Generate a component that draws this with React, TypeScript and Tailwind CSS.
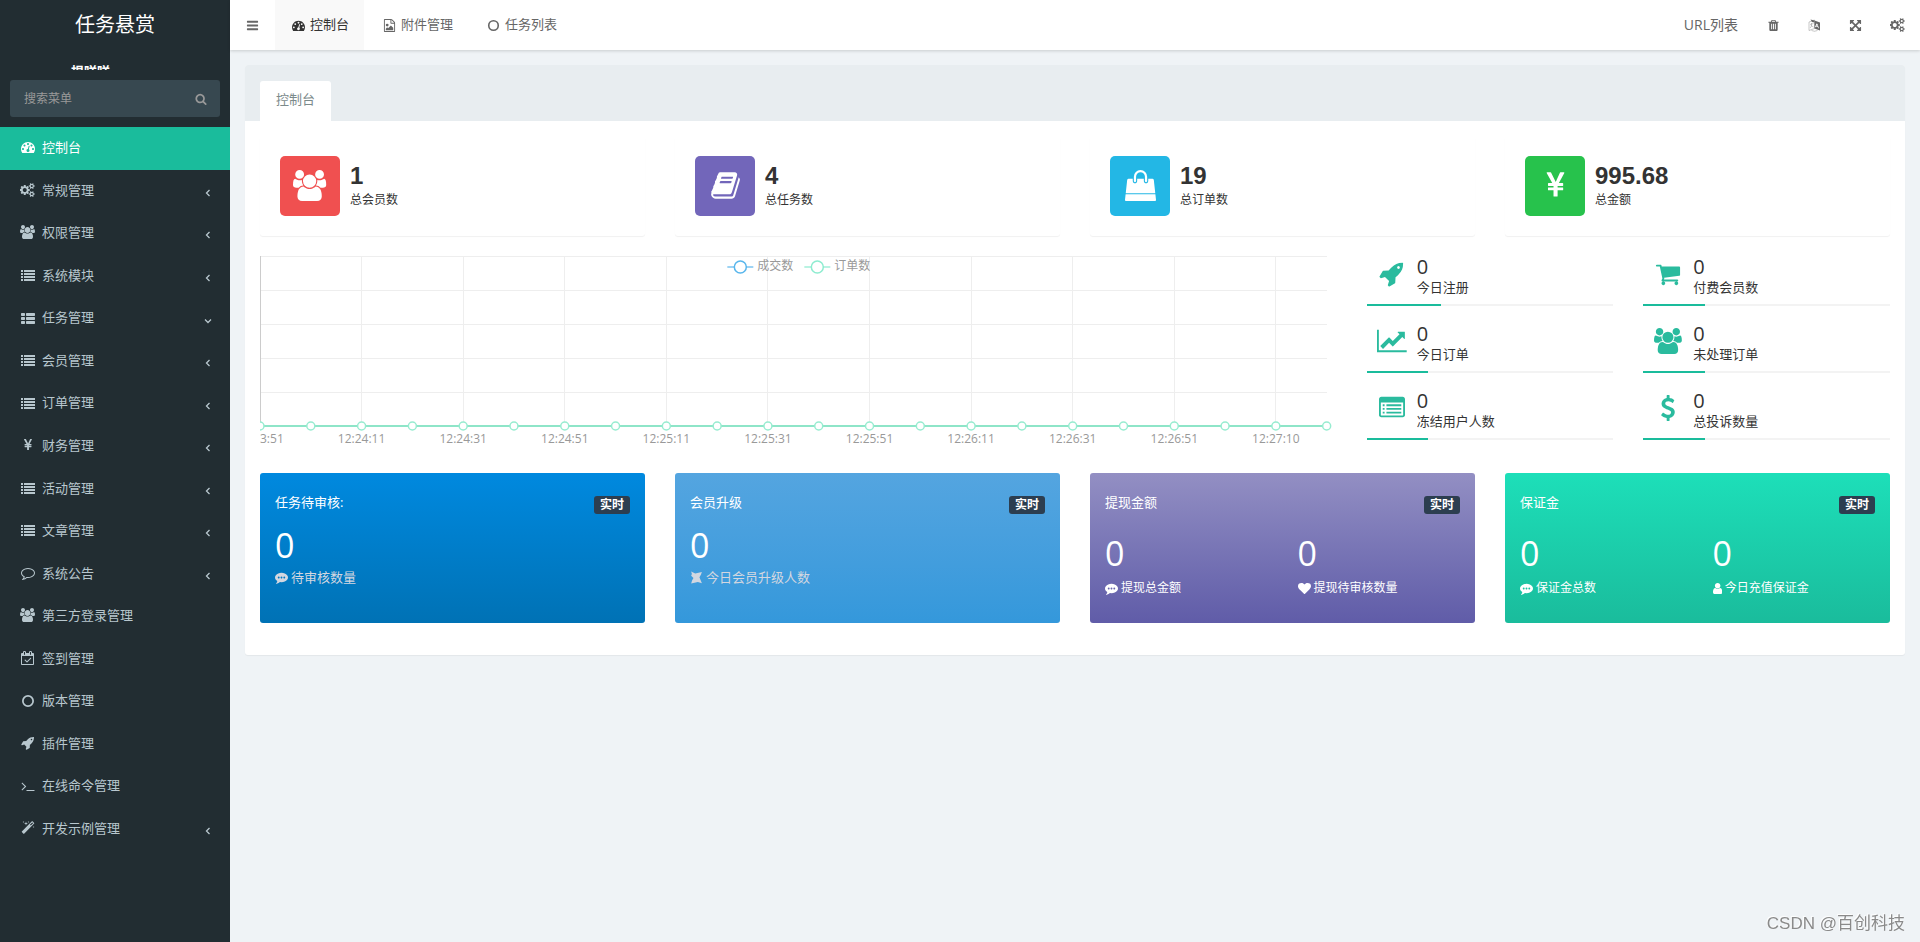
import type { ReactNode } from "react";

const GLYPHS: Record<string, { w?: number; x?: number; d: string }> = {
  bars: {
    d: "M1664 1344v128q0 26-19 45t-45 19h-1408q-26 0-45-19t-19-45v-128q0-26 19-45t45-19h1408q26 0 45 19t19 45zm0-512v128q0 26-19 45t-45 19h-1408q-26 0-45-19t-19-45v-128q0-26 19-45t45-19h1408q26 0 45 19t19 45zm0-512v128q0 26-19 45t-45 19h-1408q-26 0-45-19t-19-45v-128q0-26 19-45t45-19h1408q26 0 45 19t19 45z",
  },
  dashboard: {
    d: "M384 1152q0-53-37.5-90.5t-90.5-37.5-90.5 37.5-37.5 90.5 37.5 90.5 90.5 37.5 90.5-37.5 37.5-90.5zm192-448q0-53-37.5-90.5t-90.5-37.5-90.5 37.5-37.5 90.5 37.5 90.5 90.5 37.5 90.5-37.5 37.5-90.5zm428 481l101-382q6-26-7.5-48.5t-38.5-29.5-48 6.5-30 39.5l-101 382q-60 5-107 43.5t-63 98.5q-20 77 20 146t117 89 146-20 89-117q16-60-6-117t-72-91zm660-33q0-53-37.5-90.5t-90.5-37.5-90.5 37.5-37.5 90.5 37.5 90.5 90.5 37.5 90.5-37.5 37.5-90.5zm-640-640q0-53-37.5-90.5t-90.5-37.5-90.5 37.5-37.5 90.5 37.5 90.5 90.5 37.5 90.5-37.5 37.5-90.5zm448 192q0-53-37.5-90.5t-90.5-37.5-90.5 37.5-37.5 90.5 37.5 90.5 90.5 37.5 90.5-37.5 37.5-90.5zm320 448q0 261-141 483-19 29-54 29h-1402q-35 0-54-29-141-221-141-483 0-182 71-348t191-286 286-191 348-71 348 71 286 191 191 286 71 348z",
  },
  users: {
    w: 1920,
    x: -64,
    d: "M529 896q-162 5-265 128h-134q-82 0-138-40.5t-56-118.5q0-353 124-353 6 0 43.5 21t97.5 42.5 119 21.5q67 0 133-23-5 37-5 66 0 139 81 256zm1071 637q0 120-73 189.5t-194 69.5h-874q-121 0-194-69.5t-73-189.5q0-53 3.5-103.5t14-109 26.5-108.5 43-97.5 62-81 85.5-53.5 111.5-20q10 0 43 21.5t73 48 107 48 135 21.5 135-21.5 107-48 73-48 43-21.5q61 0 111.5 20t85.5 53.5 62 81 43 97.5 26.5 108.5 14 109 3.5 103.5zm-1024-1277q0 106-75 181t-181 75-181-75-75-181 75-181 181-75 181 75 75 181zm704 384q0 159-112.5 271.5t-271.5 112.5-271.5-112.5-112.5-271.5 112.5-271.5 271.5-112.5 271.5 112.5 112.5 271.5zm576 225q0 78-56 118.5t-138 40.5h-134q-103-123-265-128 81-117 81-256 0-29-5-66 66 23 133 23 59 0 119-21.5t97.5-42.5 43.5-21q124 0 124 353zm-128-609q0 106-75 181t-181 75-181-75-75-181 75-181 181-75 181 75 75 181z",
  },
  cogs: {
    w: 1920,
    x: -32,
    d: "M832 896q0-106-75-181t-181-75-181 75-75 181 75 181 181 75 181-75 75-181zm768 512q0-52-38-90t-90-38-90 38-38 90q0 53 37.5 90.5t90.5 37.5 90.5-37.5 37.5-90.5zm0-1024q0-52-38-90t-90-38-90 38-38 90q0 53 37.5 90.5t90.5 37.5 90.5-37.5 37.5-90.5zm-384 421v185q0 10-7 19.5t-16 10.5l-155 24q-11 35-32 76 34 48 90 115 7 11 7 20 0 12-7 19-23 30-82.5 89.5t-78.5 59.5q-11 0-21-7l-115-90q-37 19-77 31-11 108-23 155-7 24-30 24h-186q-11 0-20-7.5t-10-17.5l-23-153q-34-10-75-31l-118 89q-7 7-20 7-11 0-21-8-144-133-144-160 0-9 7-19 10-14 41-53t47-61q-23-44-35-82l-152-24q-10-1-17-9.5t-7-19.5v-185q0-10 7-19.5t16-10.5l155-24q11-35 32-76-34-48-90-115-7-11-7-20 0-12 7-20 22-30 82-89t79-59q11 0 21 7l115 90q34-18 77-32 11-108 23-154 7-24 30-24h186q11 0 20 7.5t10 17.5l23 153q34 10 75 31l118-89q8-7 20-7 11 0 21 8 144 133 144 160 0 8-7 19-12 16-42 54t-45 60q23 48 34 82l152 23q10 2 17 10.5t7 19.5zm640 533v140q0 16-149 31-12 27-30 52 51 113 51 138 0 4-4 7-122 71-124 71-8 0-46-47t-52-68q-20 2-30 2t-30-2q-14 21-52 68t-46 47q-2 0-124-71-4-3-4-7 0-25 51-138-18-25-30-52-149-15-149-31v-140q0-16 149-31 13-29 30-52-51-113-51-138 0-4 4-7 4-2 35-20t59-34 30-16q8 0 46 46.5t52 67.5q20-2 30-2t30 2q51-71 92-112l6-2q4 0 124 70 4 3 4 7 0 25-51 138 17 23 30 52 149 15 149 31zm0-1024v140q0 16-149 31-12 27-30 52 51 113 51 138 0 4-4 7-122 71-124 71-8 0-46-47t-52-68q-20 2-30 2t-30-2q-14 21-52 68t-46 47q-2 0-124-71-4-3-4-7 0-25 51-138-18-25-30-52-149-15-149-31v-140q0-16 149-31 13-29 30-52-51-113-51-138 0-4 4-7 4-2 35-20t59-34 30-16q8 0 46 46.5t52 67.5q20-2 30-2t30 2q51-71 92-112l6-2q4 0 124 70 4 3 4 7 0 25-51 138 17 23 30 52 149 15 149 31z",
  },
  list: {
    d: "M0 256h256v256h-256zM384 256h1408v256h-1408zM0 640h256v256h-256zM384 640h1408v256h-1408zM0 1024h256v256h-256zM384 1024h1408v256h-1408zM0 1408h256v256h-256zM384 1408h1408v256h-1408z",
  },
  thList: {
    d: "M96 256h320q96 0 96 96v192q0 96-96 96h-320q-96 0-96-96v-192q0-96 96-96zM736 256h960q96 0 96 96v192q0 96-96 96h-960q-96 0-96-96v-192q0-96 96-96zM96 768h320q96 0 96 96v192q0 96-96 96h-320q-96 0-96-96v-192q0-96 96-96zM736 768h960q96 0 96 96v192q0 96-96 96h-960q-96 0-96-96v-192q0-96 96-96zM96 1280h320q96 0 96 96v192q0 96-96 96h-320q-96 0-96-96v-192q0-96 96-96zM736 1280h960q96 0 96 96v192q0 96-96 96h-960q-96 0-96-96v-192q0-96 96-96z",
  },
  rocket: {
    d: "M1440 448q0-40-28-68t-68-28-68 28-28 68 28 68 68 28 68-28 28-68zm224-288q0 249-75.5 430.5t-253.5 360.5q-81 80-195 176l-20 379q-2 16-16 26l-384 224q-7 4-16 4-12 0-23-9l-64-64q-13-14-8-32l85-276-281-281-276 85q-3 1-9 1-14 0-23-9l-64-64q-17-19-5-39l224-384q10-14 26-16l379-20q96-114 176-195 188-187 358-258t431-71q14 0 24 9.5t10 22.5z",
  },
  magic: {
    d: "M1254 581l293-293-107-107-293 293zm447-293q0 27-18 45l-1286 1286q-18 18-45 18t-45-18l-198-198q-18-18-18-45t18-45l1286-1286q18-18 45-18t45 18l198 198q18 18 18 45zm-1351-190l98 30-98 30-30 98-30-98-98-30 98-30 30-98zm350 162l196 60-196 60-60 196-60-196-196-60 196-60 60-196zm930 478l98 30-98 30-30 98-30-98-98-30 98-30 30-98zm-640-640l98 30-98 30-30 98-30-98-98-30 98-30 30-98z",
  },
  circle: {
    d: "M896 128a768 768 0 1 0 0 1536a768 768 0 1 0 0-1536zm0 224a544 544 0 1 1 0 1088a544 544 0 1 1 0-1088z",
  },
  terminal: {
    d: "M649 983l-466 466q-10 10-23 10t-23-10l-50-50q-10-10-10-23t10-23l393-393-393-393q-10-10-10-23t10-23l50-50q13-10 23-10t23 10l466 466q10 10 10 23t-10 23zm1079 457v64q0 14-9 23t-23 9h-960q-14 0-23-9t-9-23v-64q0-14 9-23t23-9h960q14 0 23 9t9 23z",
  },
  calendar: {
    d: "M1303 964l-512 512q-10 9-23 9t-23-9l-288-288q-9-10-9-23t9-22l46-46q9-9 22-9t23 9l220 220 444-444q10-9 23-9t22 9l46 46q9 9 9 22t-9 23zm-1175 700h1408v-1024h-1408v1024zm384-1216v-288q0-14-9-23t-23-9h-64q-14 0-23 9t-9 23v288q0 14 9 23t23 9h64q14 0 23-9t9-23zm768 0v-288q0-14-9-23t-23-9h-64q-14 0-23 9t-9 23v288q0 14 9 23t23 9h64q14 0 23-9t9-23zm384-64v1280q0 52-38 90t-90 38h-1408q-52 0-90-38t-38-90v-1280q0-52 38-90t90-38h128v-96q0-66 47-113t113-47h64q66 0 113 47t47 113v96h384v-96q0-66 47-113t113-47h64q66 0 113 47t47 113v96h128q52 0 90 38t38 90z",
  },
  commentO: {
    d: "M896 384q-204 0-381.5 69.5t-282 187.5-104.5 255q0 112 71.5 213.5t201.5 175.5l87 50-27 96q-24 91-70 172 152-63 275-171l43-38 57 6q69 8 130 8 204 0 381.5-69.5t282-187.5 104.5-255-104.5-255-282-187.5-381.5-69.5zm896 512q0 174-120 321.5t-326 233-450 85.5q-70 0-145-8-198 175-460 242-49 14-114 22h-5q-15 0-27-10.5t-16-27.5v-1q-3-4-.5-12t2-10 4.5-9.5l6-9 7-8.5 8-9q7-8 31-34.5t34.5-38 31-39.5 32.5-51 27-59 26-76q-157-89-247.5-220t-90.5-281q0-174 120-321.5t326-233 450-85.5 450 85.5 326 233 120 321.5z",
  },
  commenting: {
    d: "M640 896q0-53-37.5-90.5t-90.5-37.5-90.5 37.5-37.5 90.5 37.5 90.5 90.5 37.5 90.5-37.5 37.5-90.5zm384 0q0-53-37.5-90.5t-90.5-37.5-90.5 37.5-37.5 90.5 37.5 90.5 90.5 37.5 90.5-37.5 37.5-90.5zm384 0q0-53-37.5-90.5t-90.5-37.5-90.5 37.5-37.5 90.5 37.5 90.5 90.5 37.5 90.5-37.5 37.5-90.5zm384 0q0 174-120 321.5t-326 233-450 85.5q-110 0-211-18-173 173-435 229-52 10-86 13-12 1-22-6t-13-18q-4-15 20-37 5-5 23.5-21.5t25.5-23.5 23.5-25.5 24-31.5 20.5-37 20-48 14.5-57.5 12.5-72.5q-146-90-229.5-216.5t-83.5-269.5q0-174 120-321.5t326-233 450-85.5 450 85.5 326 233 120 321.5z",
  },
  user: {
    w: 1280,
    x: 256,
    d: "M1536 1399q0 109-62.5 187t-150.5 78h-854q-88 0-150.5-78t-62.5-187q0-85 8.5-160.5t31.5-152 58.5-131 94-89 134.5-34.5q131 128 313 128t313-128q76 0 134.5 34.5t94 89 58.5 131 31.5 152 8.5 160.5zm-256-887q0 159-112.5 271.5t-271.5 112.5-271.5-112.5-112.5-271.5 112.5-271.5 271.5-112.5 271.5 112.5 112.5 271.5z",
  },
  heart: {
    d: "M896 1664q-26 0-44-18l-624-602q-10-8-27.5-26t-55.5-65.5-68-97.5-53.5-121-23.5-138q0-220 127-344t351-124q62 0 126.5 21.5t120 58 95.5 68.5 76 68q36-36 76-68t95.5-68.5 120-58 126.5-21.5q224 0 351 124t127 344q0 221-229 450l-623 600q-18 18-44 18z",
  },
  search: {
    d: "M1216 832q0-185-131.5-316.5t-316.5-131.5-316.5 131.5-131.5 316.5 131.5 316.5 316.5 131.5 316.5-131.5 131.5-316.5zm512 832q0 52-38 90t-90 38q-54 0-90-38l-343-342q-179 124-399 124-143 0-273.5-55.5t-225-150-150-225-55.5-273.5 55.5-273.5 150-225 225-150 273.5-55.5 273.5 55.5 225 150 150 225 55.5 273.5q0 220-124 399l343 343q37 37 37 90z",
  },
  cart: {
    d: "M704 1536q0 52-38 90t-90 38-90-38-38-90 38-90 90-38 90 38 38 90zm896 0q0 52-38 90t-90 38-90-38-38-90 38-90 90-38 90 38 38 90zm128-1088v512q0 24-16.5 42.5t-40.5 21.5l-1044 122q13 60 13 70 0 16-24 64h920q26 0 45 19t19 45-19 45-45 19h-1024q-26 0-45-19t-19-45q0-11 8-31.5t16-36 21.5-40 15.5-29.5l-177-823h-204q-26 0-45-19t-19-45 19-45 45-19h256q16 0 28.5 6.5t19.5 15.5 13 24.5 8 26 5.5 29.5 4.5 26h1201q26 0 45 19t19 45z",
  },
  lineChart: {
    w: 2048,
    d: "M2048 1536v128h-2048v-1536h128v1408h1920zm-128-1248v435q0 21-19.5 29.5t-35.5-7.5l-121-121-633 633q-10 10-23 10t-23-10l-233-233-416 416-192-192 585-585q10-10 23-10t23 10l233 233 464-464-121-121q-16-16-7.5-35.5t29.5-19.5h435q14 0 23 9t9 23z",
  },
  bag: {
    d: "M1757 1408l35 313q3 28-16 50-19 21-48 21h-1664q-29 0-48-21-19-22-16-50l35-313h1722zm-93-839l86 775h-1708l86-775q3-24 21-40.5t43-16.5h256v128q0 53 37.5 90.5t90.5 37.5 90.5-37.5 37.5-90.5v-128h384v128q0 53 37.5 90.5t90.5 37.5 90.5-37.5 37.5-90.5v-128h256q25 0 43 16.5t21 40.5zm-384-185v256q0 26-19 45t-45 19-45-19-19-45v-256q0-106-75-181t-181-75-181 75-75 181v256q0 26-19 45t-45 19-45-19-19-45v-256q0-159 112.5-271.5t271.5-112.5 271.5 112.5 112.5 271.5z",
  },
  book: {
    d: "M1703 478q40 57 18 129l-275 906q-19 64-76.5 107.5t-122.5 43.5h-923q-77 0-148.5-53.5t-99.5-131.5q-24-67-2-127 0-4 3-27t4-37q1-8-3-21.5t-3-19.5q2-11 8-21t16.5-23.5 16.5-23.5q23-38 45-91.5t30-91.5q3-10 .5-30t-.5-28q3-11 17-28t17-23q21-36 42-92t25-90q1-9-2.5-32t.5-28q4-13 22-30.5t22-22.5q19-26 42.5-84.5t27.5-96.5q1-8-3-25.5t-2-26.5q2-8 9-18t18-23 17-21q8-12 16.5-30.5t15-35 16-36 19.5-32 26.5-23.5 36-11.5 47.5 5.5l-1 3q38-9 51-9h761q74 0 114 56t18 130l-274 906q-36 119-71.5 153.5t-128.5 34.5h-869q-27 0-38 15-11 16-1 43 24 70 144 70h923q29 0 56-15.5t35-41.5l300-987q7-22 5-57 38 15 59 43zm-1064 2q-4 13 2 22.5t20 9.5h608q13 0 25.5-9.5t16.5-22.5l21-64q4-13-2-22.5t-20-9.5h-608q-13 0-25.5 9.5t-16.5 22.5zm-83 256q-4 13 2 22.5t20 9.5h608q13 0 25.5-9.5t16.5-22.5l21-64q4-13-2-22.5t-20-9.5h-608q-13 0-25.5 9.5t-16.5 22.5z",
  },
  listAlt: {
    d: "M256 1152h128v128h-128zM256 896h128v128h-128zM256 640h128v128h-128zM512 1152h1024v128h-1024zM512 896h1024v128h-1024zM512 640h1024v128h-1024zM128 512v864q0 32 32 32h1472q32 0 32-32v-864zM160 128h1472q66 0 113 47t47 113v1088q0 66-47 113t-113 47h-1472q-66 0-113-47t-47-113v-1088q0-66 47-113t113-47z",
  },
  yen: {
    d: "M985.5 1536h-172q-13 0-22.5-9t-9.5-23v-330h-288q-13 0-22.5-9t-9.5-23v-103q0-13 9.5-22.5t22.5-9.5h288v-85h-288q-13 0-22.5-9t-9.5-23v-104q0-13 9.5-22.5t22.5-9.5h214l-321-578q-8-16 0-32 10-16 28-16h194q19 0 29 18l215 425q19 38 56 125 10-24 30.5-68t27.5-61l191-420q8-19 29-19h191q17 0 27 16 9 14 1 31l-313 579h215q13 0 22.5 9.5t9.5 22.5v104q0 14-9.5 23t-22.5 9h-290v85h290q13 0 22.5 9.5t9.5 22.5v103q0 14-9.5 23t-22.5 9h-290v330q0 13-9.5 22.5t-22.5 9.5z",
  },
  dollar: {
    d: "M1362 1185q0 153-99.5 263.5t-258.5 136.5v175q0 14-9 23t-23 9h-135q-13 0-22.5-9.5t-9.5-22.5v-175q-66-9-127.5-31t-101.5-44.5-74-48-46.5-37.5-17.5-18q-17-21-2-41l103-135q7-10 23-12 15-2 24 9l2 2q113 99 243 125 37 8 74 8 81 0 142.5-43t61.5-122q0-28-15-53t-33.5-42-58.5-37.5-66-32-80-32.5q-39-16-61.5-25t-61.5-26.5-62.5-31-56.5-35.5-53.5-42.5-43.5-49-35.5-58-21-66.5-8.5-78q0-138 98-242t255-134v-180q0-13 9.5-22.5t22.5-9.5h135q14 0 23 9t9 23v176q57 6 110.5 23t87 33.5 63.5 37.5 39 29 15 14q17 18 5 38l-81 146q-8 15-23 16-14 3-27-7-3-3-14.5-12t-39-26.5-58.5-32-74.5-26-85.5-11.5q-95 0-155 43t-60 111q0 26 8.5 48t29.5 41.5 39.5 33 56 31 60.5 27 70 27.5q53 20 81 31.5t76 35 75.5 42.5 62 50 53 63.5 31.5 76.5 13 94z",
  },
  arrows: {
    d: "M1411 541l-355 355 355 355 144-144q29-31 70-14 39 17 39 59v448q0 26-19 45t-45 19h-448q-42 0-59-40-17-39 14-69l144-144-355-355-355 355 144 144q31 30 14 69-17 40-59 40h-448q-26 0-45-19t-19-45v-448q0-42 40-59 39-17 69 14l144 144 355-355-355-355-144 144q-19 19-45 19-12 0-24-5-40-17-40-59v-448q0-26 19-45t45-19h448q42 0 59 40 17 39-14 69l-144 144 355 355 355-355-144-144q-31-30-14-69 17-40 59-40h448q26 0 45 19t19 45v448q0 42-39 59-13 5-25 5-26 0-45-19z",
  },
  trash: {
    d: "M704 1376v-704q0-14-9-23t-23-9h-64q-14 0-23 9t-9 23v704q0 14 9 23t23 9h64q14 0 23-9t9-23zm256 0v-704q0-14-9-23t-23-9h-64q-14 0-23 9t-9 23v704q0 14 9 23t23 9h64q14 0 23-9t9-23zm256 0v-704q0-14-9-23t-23-9h-64q-14 0-23 9t-9 23v704q0 14 9 23t23 9h64q14 0 23-9t9-23zm-544-992h448l-48-117q-7-9-17-11h-317q-10 2-17 11zm928 32v64q0 14-9 23t-23 9h-96v948q0 83-47 143.5t-113 60.5h-832q-66 0-113-58.5t-47-141.5v-952h-96q-14 0-23-9t-9-23v-64q0-14 9-23t23-9h309l70-167q15-37 54-63t79-26h320q40 0 79 26t54 63l70 167h309q14 0 23 9t9 23z",
  },
  image: {
    d: "M1596 380q28 28 48 76t20 88v1152q0 40-28 68t-68 28h-1344q-40 0-68-28t-28-68v-1600q0-40 28-68t68-28h896q40 0 88 20t76 48zm-444-244v376h376q-10-29-22-41l-313-313q-12-12-41-22zm384 1528v-1024h-416q-40 0-68-28t-28-68v-416h-768v1536h1280zm-128-448v320h-1024v-192l192-192 128 128 384-384zm-832-192q-80 0-136-56t-56-136 56-136 136-56 136 56 56 136-56 136-136 56z",
  },
  pinwheel: {
    d: "M160 60L720 330L1640 130L1500 520L1300 860L1640 1700L1080 1500L160 1740L300 1280L480 980L160 640L260 420z",
  },
};

function Icon({ name, className = "h-[13px]" }: { name: string; className?: string }) {
  const g = GLYPHS[name];
  return (
    <svg
      aria-hidden="true"
      viewBox={`${g.x ?? 0} 0 ${g.w ?? 1792} 1792`}
      fill="currentColor"
      fillRule="evenodd"
      className={`shrink-0 ${className}`}
    >
      <path d={g.d} />
    </svg>
  );
}

function LanguageIcon() {
  return (
    <svg aria-hidden="true" viewBox="0 0 26 26" className="h-[13px] shrink-0" fill="none" stroke="currentColor">
      <path d="M2 6l11-4v17L2 23z" strokeWidth="1.2" opacity="0.6" />
      <path d="M4 11l7-2M7 8v3q0 5-3 7M6 13l5 3" strokeWidth="1.2" opacity="0.6" />
      <path d="M5 1l8 2v4l-5-1z" fill="currentColor" stroke="none" />
      <path
        fillRule="evenodd"
        d="M13 3l11 4v16l-11-4zM17 9l-3 7 1.8.6.6-1.6 3 1 .8 2.2 1.8.6-3-9zM18 11.5l1.2 3-2-.7z"
        fill="currentColor"
        stroke="none"
      />
      <path d="M7 23q6 3 12 0" strokeWidth="1.2" opacity="0.6" />
    </svg>
  );
}

function Caret({ open }: { open?: boolean }) {
  return (
    <svg
      aria-hidden="true"
      viewBox="0 0 8 8"
      className="mt-[6px] size-2"
      fill="none"
      stroke="currentColor"
      strokeWidth="1.3"
    >
      <path d={open ? "M1 2.5L4 5.5L7 2.5" : "M5.5 1L2.5 4L5.5 7"} />
    </svg>
  );
}

const MENU: { icon: string; text: string; arrow?: "left" | "down" }[] = [
  { icon: "dashboard", text: "控制台" },
  { icon: "cogs", text: "常规管理", arrow: "left" },
  { icon: "users", text: "权限管理", arrow: "left" },
  { icon: "list", text: "系统模块", arrow: "left" },
  { icon: "thList", text: "任务管理", arrow: "down" },
  { icon: "list", text: "会员管理", arrow: "left" },
  { icon: "list", text: "订单管理", arrow: "left" },
  { icon: "yen", text: "财务管理", arrow: "left" },
  { icon: "list", text: "活动管理", arrow: "left" },
  { icon: "list", text: "文章管理", arrow: "left" },
  { icon: "commentO", text: "系统公告", arrow: "left" },
  { icon: "users", text: "第三方登录管理" },
  { icon: "calendar", text: "签到管理" },
  { icon: "circle", text: "版本管理" },
  { icon: "rocket", text: "插件管理" },
  { icon: "terminal", text: "在线命令管理" },
  { icon: "magic", text: "开发示例管理", arrow: "left" },
];

function Sidebar() {
  return (
    <aside className="w-[230px] shrink-0 bg-[#222d32] text-[#b8c7ce]">
      <div className="flex h-[50px] items-center justify-center text-xl text-white">任务悬赏</div>
      <div className="h-[20px] overflow-hidden pt-[13px] pl-[71px] text-[13px] leading-[16px] font-bold text-white">
        揾咩咩
      </div>
      <form className="mx-[10px] mt-[10px] flex h-[37px] items-center rounded-[3px] bg-[#374850] text-[#999]">
        <input
          type="text"
          aria-label="搜索菜单"
          placeholder="搜索菜单"
          className="min-w-0 flex-1 bg-transparent pl-[14px] text-xs outline-none placeholder:text-[#999]"
        />
        <button type="button" aria-label="搜索" className="px-[13px]">
          <Icon name="search" className="h-3" />
        </button>
      </form>
      <nav className="mt-[10px]">
        <ul>
          {MENU.map((m, i) => (
            <li key={m.text}>
              <a
                href="#"
                className={`flex items-center pt-[11px] pr-[18px] pb-[13px] pl-[19px] leading-[1.42857] ${i === 0 ? "bg-[#1abc9c] text-white" : ""}`}
              >
                <span className="flex w-[17px] justify-center">
                  <Icon name={m.icon} className="h-[14px]" />
                </span>
                <span className="ml-[6px] flex-1">{m.text}</span>
                {m.arrow && <Caret open={m.arrow === "down"} />}
              </a>
            </li>
          ))}
        </ul>
      </nav>
    </aside>
  );
}

function TopTab({ icon, text, active }: { icon: string; text: string; active?: boolean }) {
  return (
    <a
      href="#"
      className={`flex h-full items-center gap-[3px] px-[15px] ${active ? "bg-[#f9f9f9] text-[#333]" : "text-[#666]"}`}
    >
      <span className="flex w-[17px] justify-center">
        <Icon name={icon} />
      </span>
      {text}
    </a>
  );
}

function TopButton({ label, children }: { label: string; children: ReactNode }) {
  return (
    <button type="button" aria-label={label} className="flex h-full items-center px-[14px]">
      {children}
    </button>
  );
}

function Header() {
  return (
    <header className="flex h-[50px] items-center bg-white text-[#666] shadow-[0_1px_3px_rgba(0,0,0,0.16)]">
      <button type="button" aria-label="切换菜单" className="flex h-full w-[45px] items-center justify-center">
        <Icon name="bars" />
      </button>
      <nav className="flex h-full gap-[2px]">
        <TopTab icon="dashboard" text="控制台" active />
        <TopTab icon="image" text="附件管理" />
        <TopTab icon="circle" text="任务列表" />
      </nav>
      <div className="ml-auto flex h-full items-center pr-[1px]">
        <a href="#" className="px-[15px] text-sm">
          URL列表
        </a>
        <TopButton label="清除缓存">
          <Icon name="trash" />
        </TopButton>
        <TopButton label="语言">
          <LanguageIcon />
        </TopButton>
        <TopButton label="全屏">
          <Icon name="arrows" />
        </TopButton>
        <TopButton label="设置">
          <Icon name="cogs" className="h-[14px]" />
        </TopButton>
      </div>
    </header>
  );
}

const STATS = [
  { icon: "users", value: "1", label: "总会员数", color: "bg-[#f05050]" },
  { icon: "book", value: "4", label: "总任务数", color: "bg-[#7266ba]" },
  { icon: "bag", value: "19", label: "总订单数", color: "bg-[#23b7e5]" },
  { icon: "yen", value: "995.68", label: "总金额", color: "bg-[#27c24c]" },
];

function Stats() {
  return (
    <section className="grid grid-cols-4 gap-[30px]">
      {STATS.map((s) => (
        <div
          key={s.label}
          className="flex items-center gap-[10px] rounded-[3px] p-5 shadow-[0_1px_1px_rgba(0,0,0,0.06)]"
        >
          <span className={`flex size-[60px] items-center justify-center rounded-[5px] pb-[2px] ${s.color} text-white`}>
            <Icon name={s.icon} className="h-[31px]" />
          </span>
          <div className="text-[#333]">
            <div className="font-['Liberation_Sans',sans-serif] text-2xl leading-[26px] font-bold">{s.value}</div>
            <div className="mt-[2px] text-xs leading-[18px]">{s.label}</div>
          </div>
        </div>
      ))}
    </section>
  );
}

const STEPS = 21;
const TIMES = [
  "12:23:51",
  "12:24:11",
  "12:24:31",
  "12:24:51",
  "12:25:11",
  "12:25:31",
  "12:25:51",
  "12:26:11",
  "12:26:31",
  "12:26:51",
  "12:27:10",
];
const at = (i: number) => `${(i * 100) / STEPS}%`;

function Chart() {
  return (
    <div className="col-span-8 min-w-0 overflow-hidden pr-[10px]">
      <svg width="100%" height="200" className="overflow-visible text-xs" role="img" aria-label="成交数 订单数">
        <g stroke="#eee" shapeRendering="crispEdges">
          {[0, 34, 68, 102, 136].map((y) => (
            <line key={y} x1="0" x2="100%" y1={y + 0.5} y2={y + 0.5} />
          ))}
          {TIMES.map((t, i) => (
            <line key={t} x1={at(i * 2)} x2={at(i * 2)} y1="0" y2="170" />
          ))}
          <line x1="0.5" x2="0.5" y1="0" y2="170" stroke="#ccc" />
        </g>
        <line x1="0" x2="100%" y1="170" y2="170" stroke="#8ee5c8" strokeWidth="2" />
        {Array.from({ length: STEPS + 1 }, (_, i) => (
          <circle key={i} cx={at(i)} cy="170" r="4" fill="#fff" stroke="#97ecd0" strokeWidth="1.5" />
        ))}
        {TIMES.map((t, i) => (
          <text key={t} x={at(i * 2)} y="187" textAnchor="middle" fill="#999">
            {t}
          </text>
        ))}
        <svg x="50%" y="0" className="overflow-visible">
          <g fill="#fff" strokeWidth="1.5">
            <path d="M-66 11h26" stroke="#7cc5f0" />
            <circle cx="-53" cy="11" r="6" stroke="#58b6ec" />
            <path d="M11 11h26" stroke="#a2efd8" />
            <circle cx="24" cy="11" r="6" stroke="#8eecd0" />
          </g>
          <g fill="#999">
            <text x="-36" y="14">
              成交数
            </text>
            <text x="41" y="14">
              订单数
            </text>
          </g>
        </svg>
      </svg>
    </div>
  );
}

const TODAY = [
  { icon: "rocket", label: "今日注册", bar: "w-[30%]" },
  { icon: "cart", label: "付费会员数", bar: "w-1/4" },
  { icon: "lineChart", label: "今日订单", bar: "w-1/4" },
  { icon: "users", label: "未处理订单", bar: "w-1/4" },
  { icon: "listAlt", label: "冻结用户人数", bar: "w-1/4" },
  { icon: "dollar", label: "总投诉数量", bar: "w-1/4" },
];

function Today() {
  return (
    <div className="col-span-4 grid grid-cols-2 content-start gap-x-[30px] gap-y-[17px]">
      {TODAY.map((t) => (
        <div key={t.label}>
          <div className="flex h-12">
            <span className="flex h-9 w-[50px] items-center justify-center text-[#2abb9e]">
              <Icon name={t.icon} className="h-[26px]" />
            </span>
            <div className="text-[#333]">
              <div className="text-xl leading-[22px]">0</div>
              <div className="leading-[18px]">{t.label}</div>
            </div>
          </div>
          <div className="h-[2px] bg-[#f3f3f3]">
            <div className={`h-full bg-[#1abc9c] ${t.bar}`} />
          </div>
        </div>
      ))}
    </div>
  );
}

function Card({ title, color, children }: { title: string; color: string; children: ReactNode }) {
  return (
    <article className={`h-[150px] rounded-[3px] bg-linear-to-b px-[15px] pt-5 text-white ${color}`}>
      <div className="flex h-5 items-start justify-between">
        <h5 className="leading-[18px]">{title}</h5>
        <span className="mt-[3px] rounded-[3px] bg-[#2c3e50] px-[6px] text-xs leading-[18px] font-bold">实时</span>
      </div>
      {children}
    </article>
  );
}

function Wide({ icon, label }: { icon: string; label: string }) {
  return (
    <div className="pt-3">
      <div className="text-[34px] leading-[40px]">0</div>
      <div className="flex items-center gap-[3px] pt-[3px] leading-[18px] text-[#d3d7e0]">
        <Icon name={icon} />
        {label}
      </div>
    </div>
  );
}

function Pair({ items }: { items: { icon: string; label: string }[] }) {
  return (
    <div className="grid grid-cols-2 gap-[30px] pt-5">
      {items.map((it) => (
        <div key={it.label}>
          <div className="text-[34px] leading-[40px]">0</div>
          <div className="flex items-center gap-[3px] pt-[5px] text-xs leading-[20px] whitespace-nowrap">
            <Icon name={it.icon} />
            {it.label}
          </div>
        </div>
      ))}
    </div>
  );
}

export default function App() {
  return (
    <div className="flex min-h-screen bg-[#eff3f6] font-['Open_Sans','Noto_Sans_CJK_SC',sans-serif] text-[13px]">
      <Sidebar />
      <div className="min-w-0 flex-1">
        <Header />
        <main className="p-[15px]">
          <div className="rounded-[3px] bg-white shadow-[0_1px_1px_rgba(0,0,0,0.05)]">
            <div className="flex rounded-t-[3px] bg-[#e8edf0] px-[15px] pt-4">
              <a href="#" className="rounded-t-[3px] bg-white px-4 pb-1 leading-[36px] text-[#7b8a8b]">
                控制台
              </a>
            </div>
            <div className="px-[15px] pt-[15px] pb-8">
              <Stats />
              <div className="mt-5 grid grid-cols-12 gap-[30px]">
                <Chart />
                <Today />
              </div>
              <section className="mt-[17px] grid grid-cols-4 gap-[30px]">
                <Card title="任务待审核:" color="from-[#0089df] to-[#0072b5]">
                  <Wide icon="commenting" label="待审核数量" />
                </Card>
                <Card title="会员升级" color="from-[#54a5e0] to-[#3498db]">
                  <Wide icon="pinwheel" label="今日会员升级人数" />
                </Card>
                <Card title="提现金额" color="from-[#938fc3] to-[#605ca8]">
                  <Pair
                    items={[
                      { icon: "commenting", label: "提现总金额" },
                      { icon: "heart", label: "提现待审核数量" },
                    ]}
                  />
                </Card>
                <Card title="保证金" color="from-[#1ddfb9] to-[#1abc9c]">
                  <Pair
                    items={[
                      { icon: "commenting", label: "保证金总数" },
                      { icon: "user", label: "今日充值保证金" },
                    ]}
                  />
                </Card>
              </section>
            </div>
          </div>
        </main>
      </div>
      <div className="pointer-events-none fixed right-[15px] bottom-[5px] font-['Liberation_Sans','Noto_Sans_CJK_SC',sans-serif] text-[17px] leading-[26px] text-[#8a8a8a] [text-shadow:-1px_-1px_1px_#fff]">
        CSDN @百创科技
      </div>
    </div>
  );
}
